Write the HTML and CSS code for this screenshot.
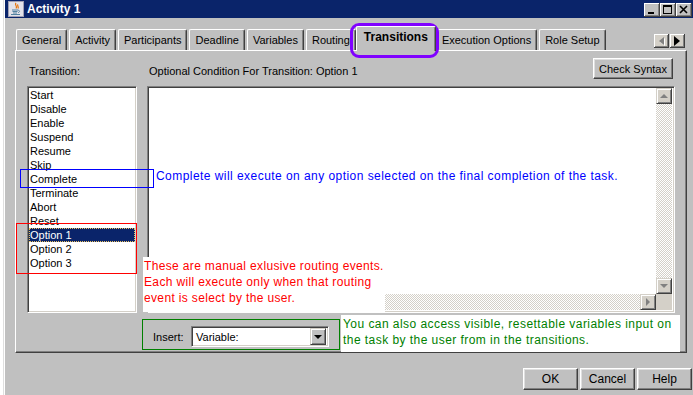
FILE: index.html
```html
<!DOCTYPE html>
<html>
<head>
<meta charset="utf-8">
<title>Activity 1</title>
<link rel="stylesheet" href="styles.css">
</head>
<body>
<div class="window">
  <div class="titlebar">
    <svg class="app-icon" viewBox="0 0 16 16" width="16" height="16">
      <rect x="0.5" y="0.5" width="15" height="15" fill="#e2e2ea" stroke="#a0a0b4"/>
      <path d="M8 2c-2 2 2 3 0 5.5M10 3.5c-1.2 1.2 1 2 0 4" stroke="#e76f00" fill="none" stroke-width="1.2"/>
      <path d="M4 9h6M4.5 10.5h5M5 12h4" stroke="#5382a1" stroke-width="1"/>
      <path d="M10 9.2c2 0 2 2.2 0 2.4" stroke="#5382a1" fill="none"/>
      <path d="M3 13.5h9" stroke="#5382a1"/>
    </svg>
    <span class="title">Activity 1</span>
    <div class="caption-buttons">
      <div class="cap-btn"><svg viewBox="0 0 16 14" width="16" height="14"><rect x="4" y="9" width="6" height="2" fill="#000"/></svg></div>
      <div class="cap-btn"><svg viewBox="0 0 16 14" width="16" height="14"><rect x="3.5" y="2.5" width="8" height="8" fill="none" stroke="#000"/><rect x="3" y="2" width="9" height="2" fill="#000"/></svg></div>
      <div class="cap-btn"><svg viewBox="0 0 16 14" width="16" height="14"><path d="M4 3l7 7M11 3l-7 7" stroke="#000" stroke-width="1.6"/></svg></div>
    </div>
  </div>

  <div class="tabstrip">
    <div class="tab">General</div>
    <div class="tab">Activity</div>
    <div class="tab">Participants</div>
    <div class="tab">Deadline</div>
    <div class="tab">Variables</div>
    <div class="tab">Routing</div>
    <div class="tab selected">Transitions</div>
    <div class="tab">Execution Options</div>
    <div class="tab">Role Setup</div>
    <div class="tab-scroll">
      <div class="tscroll-btn"><svg viewBox="0 0 15 14" width="15" height="14"><path d="M10 3v8L5 7z" fill="#fff" transform="translate(1,1)"/><path d="M10 3v8L5 7z" fill="#808080"/></svg></div>
      <div class="tscroll-btn"><svg viewBox="0 0 15 14" width="15" height="14"><path d="M4 2v10l6-5z" fill="#000"/></svg></div>
    </div>
  </div>

  <div class="panel">
    <div class="panel-grid">
      <div class="field-label">Transition:</div>
      <div class="cond-head">
        <span class="field-label">Optional Condition For Transition: Option 1</span>
        <button class="btn check-btn">Check Syntax</button>
      </div>
      <div class="listbox">
        <div class="item">Start</div>
        <div class="item">Disable</div>
        <div class="item">Enable</div>
        <div class="item">Suspend</div>
        <div class="item">Resume</div>
        <div class="item">Skip</div>
        <div class="item">Complete</div>
        <div class="item">Terminate</div>
        <div class="item">Abort</div>
        <div class="item">Reset</div>
        <div class="item selected">Option 1</div>
        <div class="item">Option 2</div>
        <div class="item">Option 3</div>
      </div>
      <div class="textarea">
        <div class="editor"></div>
        <div class="vscroll">
          <div class="sbtn"><span class="arrow up"></span></div>
          <div class="track"></div>
          <div class="sbtn"><span class="arrow down"></span></div>
        </div>
        <div class="hscroll">
          <div class="sbtn"><span class="arrow left"></span></div>
          <div class="track"></div>
          <div class="sbtn"><span class="arrow right"></span></div>
        </div>
        <div class="corner"></div>
      </div>
    </div>
    <div class="insert-row">
      <span class="insert-label">Insert:</span>
      <div class="combo">
        <span class="combo-text">Variable:</span>
        <div class="combo-btn"><span class="arrow down black"></span></div>
      </div>
    </div>
  </div>

  <div class="footer">
    <button class="btn foot-btn">OK</button>
    <button class="btn foot-btn">Cancel</button>
    <button class="btn foot-btn">Help</button>
  </div>
</div>

<div class="ann ann-purple"></div>
<div class="ann ann-blue-box"></div>
<div class="ann ann-blue-text">Complete will execute on any option selected on the final completion of the task.</div>
<div class="ann ann-red-box"></div>
<div class="ann ann-red-text">These are manual exlusive routing events.<br>Each will execute only when that routing<br>event is select by the user.</div>
<div class="ann ann-green-box"></div>
<div class="ann ann-green-text">You can also access visible, resettable variables input on<br>the task by the user from in the transitions.</div>
</body>
</html>
```

FILE: styles.css
```css
* { box-sizing: border-box; }
html, body { margin: 0; padding: 0; }
body {
  width: 693px;
  height: 395px;
  overflow: hidden;
  position: relative;
  background: #fff;
  font-family: "Liberation Sans", Arial, sans-serif;
  font-size: 11px;
  color: #000;
}

.window {
  margin-left: 3px;
  width: 692px;
  height: 395px;
  background: #c0c0c0;
  border-left: 1px solid #dfdfdf;
  padding-left: 1px;
  box-shadow: inset 1px 0 0 #fff;
}

/* title bar */
.titlebar {
  height: 18px;
  background: #0a246a;
  display: flex;
  align-items: flex-start;
  padding: 1px 3px 0 3px;
}
.app-icon { display: block; flex: none; }
.title {
  color: #fff;
  font-weight: bold;
  font-size: 12px;
  line-height: 16px;
  margin-left: 3px;
}
.caption-buttons {
  margin-left: auto;
  display: flex;
  padding-top: 2px;
}
.cap-btn {
  width: 16px;
  height: 14px;
  background: #c0c0c0;
  box-shadow: inset -1px -1px 0 #404040, inset 1px 1px 0 #fff, inset -2px -2px 0 #808080;
}
.cap-btn svg { display: block; }

/* tabs */
.tabstrip {
  height: 32px;
  display: flex;
  align-items: flex-end;
  padding-left: 11px;
}
.tab {
  height: 21px;
  padding: 2px 5px 0 5px;
  line-height: 17px;
  border-top: 1px solid #fff;
  border-left: 1px solid #fff;
  border-right: 1px solid #404040;
  border-radius: 2px 2px 0 0;
  box-shadow: inset -1px 0 0 #808080;
  margin-right: 2px;
  white-space: nowrap;
  background: #c0c0c0;
}
.tab.selected {
  height: 25px;
  margin: 0 0 -1px -2px;
  padding: 2px 7px 0 7px;
  font-weight: bold;
  font-size: 12px;
  position: relative;
  z-index: 2;
}
.tab-scroll {
  margin-left: auto;
  margin-right: 10px;
  margin-bottom: 2px;
  display: flex;
  gap: 1px;
}
.tscroll-btn {
  width: 15px;
  height: 14px;
  background: #d4d0c8;
  box-shadow: inset -1px -1px 0 #404040, inset 1px 1px 0 #fff, inset -2px -2px 0 #808080;
}
.tscroll-btn svg { display: block; }

/* panel */
.panel {
  margin-left: 10px;
  width: 672px;
  height: 303px;
  border-top: 1px solid #fff;
  border-left: 1px solid #fff;
  border-right: 1px solid #404040;
  border-bottom: 1px solid #404040;
  box-shadow: inset -1px -1px 0 #808080;
  padding: 7px 11px 0 11px;
}
.panel-grid {
  display: grid;
  grid-template-columns: 110px 528px;
  grid-template-rows: 21px 227px;
  column-gap: 10px;
  row-gap: 7px;
}
.field-label {
  align-self: end;
  line-height: 13px;
  margin-bottom: 1px;
  padding-left: 2px;
  white-space: nowrap;
}
.cond-head {
  display: flex;
  justify-content: space-between;
}
.btn {
  font-family: "Liberation Sans", Arial, sans-serif;
  font-size: 12px;
  color: #000;
  background: #c0c0c0;
  border: 1px solid;
  border-color: #fff #404040 #404040 #fff;
  box-shadow: inset -1px -1px 0 #808080, inset 1px 1px 0 #dfdfdf;
  padding: 0;
  margin: 0;
}
.check-btn {
  width: 80px;
  height: 21px;
  font-size: 11px;
  margin-right: 2px;
}

.listbox {
  background: #fff;
  border: 1px solid;
  border-color: #808080 #fff #fff #808080;
  box-shadow: inset 1px 1px 0 #404040, inset -1px -1px 0 #d4d0c8;
  padding: 1px;
}
.item {
  height: 14px;
  line-height: 14px;
  padding-left: 1px;
  white-space: nowrap;
}
.item.selected {
  background: #0a246a;
  color: #fff;
  outline: 1px dotted #e8c060;
  outline-offset: -1px;
}

.textarea {
  border: 1px solid;
  border-color: #808080 #fff #fff #808080;
  box-shadow: inset 1px 1px 0 #404040, inset -1px -1px 0 #d4d0c8;
  padding: 1px 2px 2px 1px;
  display: grid;
  grid-template-columns: 1fr 16px;
  grid-template-rows: 1fr 16px;
  background: #fff;
}
.editor { background: #fff; }
.vscroll {
  display: flex;
  flex-direction: column;
}
.hscroll {
  display: flex;
}
.track {
  flex: 1;
  background: repeating-conic-gradient(#d4d0c8 0 25%, #fff 0 50%) 0 0 / 2px 2px;
}
.corner { background: #d4d0c8; }
.sbtn {
  width: 16px;
  height: 16px;
  flex: none;
  background: #d4d0c8;
  border: 1px solid;
  border-color: #d4d0c8 #404040 #404040 #d4d0c8;
  box-shadow: inset 1px 1px 0 #fff, inset -1px -1px 0 #808080;
  display: flex;
  align-items: center;
  justify-content: center;
}
.arrow {
  width: 0;
  height: 0;
  display: block;
}
.arrow.up { border-left: 4px solid transparent; border-right: 4px solid transparent; border-bottom: 4px solid #808080; }
.arrow.down { border-left: 4px solid transparent; border-right: 4px solid transparent; border-top: 4px solid #808080; }
.arrow.left { border-top: 4px solid transparent; border-bottom: 4px solid transparent; border-right: 4px solid #808080; }
.arrow.right { border-top: 4px solid transparent; border-bottom: 4px solid transparent; border-left: 4px solid #808080; }
.arrow.down.black { border-top-color: #000; }

.insert-row {
  margin-top: 13px;
  margin-left: 126px;
  display: flex;
  align-items: center;
  height: 21px;
}
.insert-label {
  width: 38px;
  font-size: 11px;
}
.combo {
  width: 138px;
  height: 21px;
  background: #fff;
  border: 1px solid;
  border-color: #808080 #fff #fff #808080;
  box-shadow: inset 1px 1px 0 #404040, inset -1px -1px 0 #d4d0c8;
  padding: 2px;
  display: flex;
  align-items: center;
}
.combo-text {
  flex: 1;
  padding-left: 2px;
  font-size: 11px;
}
.combo-btn {
  width: 16px;
  height: 17px;
  background: #c0c0c0;
  border: 1px solid;
  border-color: #d4d0c8 #404040 #404040 #d4d0c8;
  box-shadow: inset 1px 1px 0 #fff, inset -1px -1px 0 #808080;
  display: flex;
  align-items: center;
  justify-content: center;
}

.footer {
  margin-top: 15px;
  display: flex;
  justify-content: flex-end;
  gap: 2px;
  padding-right: 3px;
}
.foot-btn {
  width: 55px;
  height: 22px;
}

/* annotations overlaid on the screenshot */
.ann { position: absolute; }
.ann-purple {
  left: 350px; top: 23px; width: 89px; height: 35px;
  border: 3px solid #8000ff;
  border-radius: 9px;
}
.ann-blue-box {
  left: 20px; top: 169px; width: 134px; height: 19px;
  border: 1px solid #0000ff;
}
.ann-blue-text {
  left: 156px; top: 168px;
  color: #0000ff;
  font-size: 12px;
  line-height: 16px;
  letter-spacing: 0.45px;
  white-space: nowrap;
}
.ann-red-box {
  left: 16px; top: 223px; width: 121px; height: 51px;
  border: 1px solid #ff0000;
}
.ann-red-text {
  left: 143px; top: 257px; width: 242px; height: 55px;
  background: #fff;
  color: #ff0000;
  font-size: 12px;
  line-height: 16px;
  letter-spacing: 0.35px;
  padding: 1px 0 0 1px;
  white-space: nowrap;
}
.ann-green-box {
  left: 142px; top: 319px; width: 198px; height: 31px;
  border: 1px solid #008000;
}
.ann-green-text {
  left: 341px; top: 315px; width: 339px; height: 37px;
  background: #fff;
  color: #008000;
  font-size: 12px;
  line-height: 16px;
  letter-spacing: 0.45px;
  padding: 1px 0 0 2px;
  white-space: nowrap;
}
```
